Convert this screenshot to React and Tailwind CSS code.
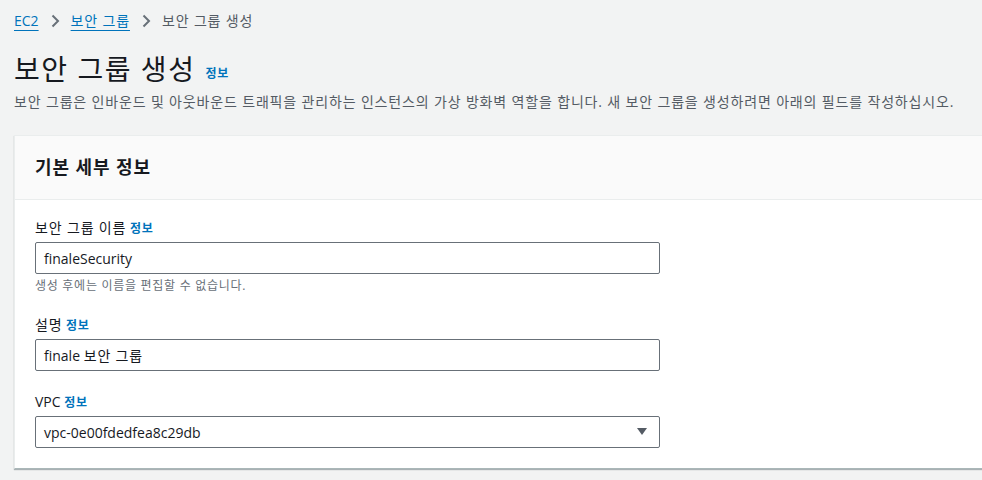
import React from "react";

const Info = ({ className = "" }) => (
  <span className={"text-[#0073bb] font-bold text-[12px] tracking-[0.06em] " + className}>정보</span>
);

const Chevron = () => (
  <svg width="16" height="16" viewBox="0 0 16 16" className="mx-[8px]">
    <path d="M5.5 2.5 L11 8 L5.5 13.5" fill="none" stroke="#687078" strokeWidth="2" />
  </svg>
);

const Field = ({ label, children }) => (
  <div>
    <div className="text-[14px] leading-[20px] text-[#16191f]">
      {label} <Info />
    </div>
    <div className="mt-[3px]">{children}</div>
  </div>
);

const App = () => {
  return (
    <div
      className="min-h-[480px] bg-[#f2f3f3] overflow-hidden pl-[14px]"
      style={{ fontFamily: '"Open Sans", "Noto Sans CJK KR", sans-serif' }}
    >
      <nav className="flex items-center pt-[11px] text-[14px] leading-[20px]">
        <a className="text-[#0073bb] underline underline-offset-[4px]">EC2</a>
        <Chevron />
        <a className="text-[#0073bb] underline underline-offset-[4px] tracking-[0.06em]">보안 그룹</a>
        <Chevron />
        <span className="text-[#545b64] tracking-[0.06em]">보안 그룹 생성</span>
      </nav>

      <div className="mt-[20px] flex items-end">
        <h1 className="text-[28px] leading-[36px] text-[#16191f] tracking-[0.055em]">보안 그룹 생성</h1>
        <Info className="ml-[10px] mb-[4px]" />
      </div>
      <p className="mt-[5px] text-[14px] leading-[20px] text-[#545b64] whitespace-nowrap tracking-[0.06em]">
        보안 그룹은 인바운드 및 아웃바운드 트래픽을 관리하는 인스턴스의 가상 방화벽 역할을 합니다. 새 보안 그룹을 생성하려면 아래의 필드를 작성하십시오.
      </p>

      <section className="mt-[23px] w-[1000px] bg-white border border-[#eaeded] border-b-[#aab7b8] shadow-[0_1px_1px_0_rgba(0,28,36,0.3)]">
        <div className="h-[64px] bg-[#fafafa] border-b border-[#eaeded] px-[20px] flex items-center">
          <h2 className="text-[18px] font-bold text-[#16191f] tracking-[0.05em]">기본 세부 정보</h2>
        </div>
        <div className="px-[20px] pt-[18px] pb-[20px] flex flex-col gap-[21px]">
          <Field label={<span className="tracking-[0.06em]">보안 그룹 이름</span>}>
            <div className="w-[625px] h-[32px] border border-[#687078] rounded-[2px] px-[8px] flex items-center text-[14px] text-[#16191f]">
              finaleSecurity
            </div>
            <div className="mt-[4px] text-[12px] leading-[16px] text-[#687078] tracking-[0.06em]">
              생성 후에는 이름을 편집할 수 없습니다.
            </div>
          </Field>
          <Field label={<span className="tracking-[0.06em]">설명</span>}>
            <div className="w-[625px] h-[32px] border border-[#687078] rounded-[2px] px-[8px] flex items-center text-[14px] text-[#16191f] whitespace-pre">
              finale <span className="tracking-[0.06em]">보안 그룹</span>
            </div>
          </Field>
          <Field label="VPC">
            <div className="w-[625px] h-[32px] border border-[#687078] rounded-[2px] pl-[8px] pr-[12px] flex items-center justify-between text-[14px] text-[#16191f]">
              <span>vpc-0e00fdedfea8c29db</span>
              <svg width="10" height="8" viewBox="0 0 10 8">
                <path d="M0 0 H10 L5 7 Z" fill="#545b64" />
              </svg>
            </div>
          </Field>
        </div>
      </section>
    </div>
  );
};

export default App;
